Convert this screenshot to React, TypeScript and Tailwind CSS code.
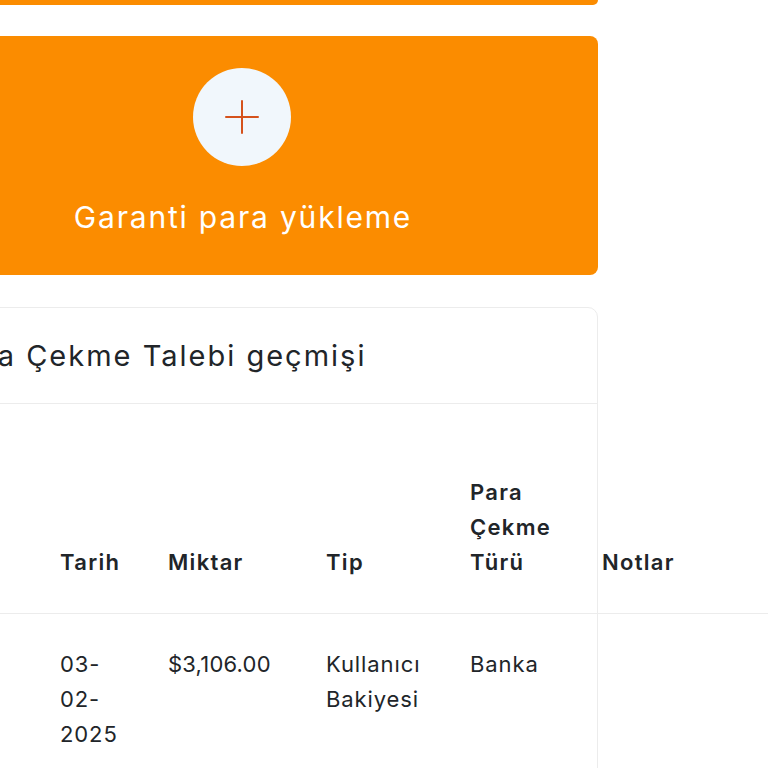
import React from "react";

export default function App() {
  const font = { fontFamily: "Inter, 'Noto Sans', sans-serif" };
  return (
    <div className="h-[768px] w-[768px] overflow-hidden bg-white text-[#212529]" style={font}>
      <div className="ml-[-114px] w-[712px] flex flex-col">
        <div className="h-[5px] rounded-b-[8px] bg-[#fb8c00]" />
        <div className="mt-[31px] h-[239px] rounded-[8px] bg-[#fb8c00] flex flex-col items-center pt-[32px]">
          <div className="w-[98px] h-[98px] rounded-full bg-[#f1f7fc] flex items-center justify-center">
            <svg width="36" height="36" viewBox="0 0 36 36" fill="none">
              <path d="M18 2v32M2 18h32" stroke="#d5521c" strokeWidth="2" strokeLinecap="round" />
            </svg>
          </div>
          <div className="mt-[29px] text-[30px] leading-[45px] text-white tracking-[1.8px] pl-[2px]">Garanti para yükleme</div>
        </div>
        <div className="mt-[32px] rounded-[10px] border border-[#ececec] h-[600px]">
          <div className="h-[96px] flex items-center pl-[59px] border-b border-[#ececec]">
            <h2 className="text-[29px] leading-[40px] font-normal tracking-[2px] pt-[1px]">Para Çekme Talebi geçmişi</h2>
          </div>
          <table className="table-fixed w-[916px] border-collapse text-[22px] leading-[35px]">
            <colgroup>
              <col className="w-[173px]" />
              <col className="w-[108px]" />
              <col className="w-[158px]" />
              <col className="w-[144px]" />
              <col className="w-[132px]" />
              <col className="w-[201px]" />
            </colgroup>
            <thead>
              <tr className="border-b border-[#ececec] tracking-[1.3px]">
                <th className="h-[209px] align-bottom text-left pb-[33px] font-semibold"></th>
                <th className="align-bottom text-left pb-[33px] font-semibold">Tarih</th>
                <th className="align-bottom text-left pb-[33px] font-semibold">Miktar</th>
                <th className="align-bottom text-left pb-[33px] font-semibold">Tip</th>
                <th className="align-bottom text-left pb-[33px] font-semibold">
                  <span className="block">Para</span>
                  <span className="block">Çekme</span>
                  <span className="block">Türü</span>
                </th>
                <th className="align-bottom text-left pb-[33px] font-semibold">Notlar</th>
              </tr>
            </thead>
            <tbody className="tracking-[0.9px]">
              <tr>
                <td className="align-top pt-[33px]"></td>
                <td className="align-top pt-[33px]">
                  <span className="block">03-</span>
                  <span className="block">02-</span>
                  <span className="block">2025</span>
                </td>
                <td className="align-top pt-[33px] tracking-[0.2px]">$3,106.00</td>
                <td className="align-top pt-[33px]">
                  <span className="block">Kullanıcı</span>
                  <span className="block">Bakiyesi</span>
                </td>
                <td className="align-top pt-[33px]">Banka</td>
                <td className="align-top pt-[33px]"></td>
              </tr>
            </tbody>
          </table>
        </div>
      </div>
    </div>
  );
}
